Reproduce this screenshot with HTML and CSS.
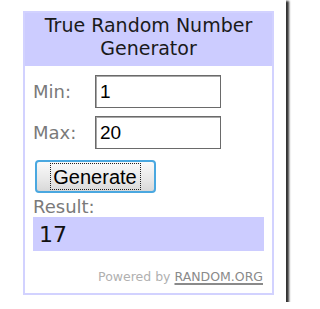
FILE: index.html
```html
<!DOCTYPE html>
<html>
<head>
<meta charset="utf-8">
<link rel="stylesheet" href="styles.css">
</head>
<body>
<div class="frame">
  <div class="panel">
    <div class="header">True Random Number<br>Generator</div>
    <div class="body">
      <div class="row row-min">
        <span class="label">Min:</span>
        <input class="field" type="text" value="1">
      </div>
      <div class="row row-max">
        <span class="label">Max:</span>
        <input class="field" type="text" value="20">
      </div>
      <button class="btn"><span class="focus">Generate</span></button>
      <div class="label result-label">Result:</div>
      <div class="result">17</div>
      <div class="powered">Powered by <span class="link">RANDOM.ORG</span></div>
    </div>
  </div>
</div>
</body>
</html>
```

FILE: styles.css
```css
html, body {
  margin: 0;
  padding: 0;
  background: #fff;
}
.frame {
  width: 286px;
  height: 302px;
  box-sizing: border-box;
  padding: 11px 0 0 23px;
  background: #fff;
  box-shadow: 2px 2px 2px 1px rgba(0, 0, 0, 0.8);
}
.panel {
  width: 251px;
  height: 284px;
  box-sizing: border-box;
  border: 2px solid #d2d2ff;
  background: #fff;
  display: flex;
  flex-direction: column;
}
.header {
  background: #ccccff;
  height: 53px;
  box-sizing: border-box;
  padding-top: 1px;
  text-align: center;
  font-family: "DejaVu Sans", Verdana, sans-serif;
  font-size: 19px;
  line-height: 23px;
  color: #1a1a1a;
}
.body {
  padding: 9px 8px 0 8px;
  display: flex;
  flex-direction: column;
  align-items: flex-start;
}
.row {
  display: flex;
  align-items: center;
  height: 33px;
}
.row-max {
  margin-top: 8px;
}
.label {
  font-family: "DejaVu Sans", Verdana, sans-serif;
  font-size: 18px;
  line-height: 20px;
  color: #7a7a7a;
  width: 62px;
}
.field {
  box-sizing: border-box;
  width: 126px;
  height: 33px;
  margin: 0;
  padding: 0 4px;
  border: 1px solid #6a6a6a;
  box-shadow: inset 1px 1px 0 #a8a8a8;
  background: #fff;
  font-family: "Liberation Sans", Arial, sans-serif;
  font-size: 19px;
  color: #000;
  outline: none;
}
.btn {
  margin: 11px 0 0 2px;
  width: 121px;
  height: 33px;
  box-sizing: border-box;
  border: 2px solid #4aa8e0;
  border-radius: 4px;
  background: linear-gradient(#fafafa, #e8e8e8 60%, #d8d8d8);
  padding: 0;
  display: flex;
  align-items: center;
  justify-content: center;
  font-family: "Liberation Sans", Arial, sans-serif;
  font-size: 20px;
  color: #000;
}
.focus {
  outline: 1px dotted #222;
  padding: 2px 3px 1px 2px;
  line-height: 22px;
}
.result-label {
  width: auto;
  margin-top: 4px;
}
.result {
  align-self: stretch;
  height: 34px;
  box-sizing: border-box;
  padding: 2px 0 0 6px;
  background: #ccccff;
  font-family: "DejaVu Sans", Verdana, sans-serif;
  font-size: 22px;
  line-height: 32px;
  color: #111;
}
.powered {
  align-self: stretch;
  margin-top: 18px;
  padding-right: 1px;
  text-align: right;
  font-family: "DejaVu Sans", Verdana, sans-serif;
  font-size: 12.5px;
  line-height: 15px;
  color: #b0b0b0;
}
.link {
  color: #8a8a8a;
  text-decoration: underline;
  text-decoration-thickness: 2px;
  text-underline-offset: 2px;
}
```
